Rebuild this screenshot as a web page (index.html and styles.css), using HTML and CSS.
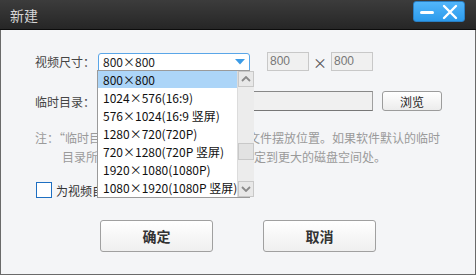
FILE: index.html
```html
<!DOCTYPE html>
<html lang="zh-CN">
<head>
    <meta charset="UTF-8">
    <title>新建</title>
    <link rel="stylesheet" href="styles.css">
</head>
<body>
    <div class="window">
        <div class="titlebar">
            <span class="title">新建</span>
            <div class="win-btns">
                <svg class="win-min" width="16" height="22" viewBox="0 0 16 22">
                    <rect x="1" y="10" width="14" height="3" rx="1.5" fill="#fff"/>
                </svg>
                <svg class="win-close" width="16" height="22" viewBox="0 0 16 22">
                    <path d="M2 5 L14 17 M14 5 L2 17" stroke="#fff" stroke-width="2.4" stroke-linecap="round"/>
                </svg>
            </div>
        </div>

        <div class="content">
            <div class="row">
                <span class="label">视频尺寸：</span>
                <div class="combo">
                    <span class="combo-text">800×800</span>
                    <svg class="combo-arrow" width="10" height="6" viewBox="0 0 10 6">
                        <path d="M0 0 H10 L5 5.5 Z" fill="#3c9be6"/>
                    </svg>
                    <div class="dropdown">
                        <ul class="options">
                            <li class="selected">800×800</li>
                            <li>1024×576(16:9)</li>
                            <li>576×1024(16:9 竖屏)</li>
                            <li>1280×720(720P)</li>
                            <li>720×1280(720P 竖屏)</li>
                            <li>1920×1080(1080P)</li>
                            <li>1080×1920(1080P 竖屏)</li>
                        </ul>
                        <div class="scrollbar">
                            <div class="sb-btn">
                                <svg width="10" height="6" viewBox="0 0 10 6"><path d="M1 5 L5 1 L9 5" stroke="#8a8a8a" stroke-width="1.8" fill="none"/></svg>
                            </div>
                            <div class="sb-track"><div class="sb-thumb"></div></div>
                            <div class="sb-btn">
                                <svg width="10" height="6" viewBox="0 0 10 6"><path d="M1 1 L5 5 L9 1" stroke="#8a8a8a" stroke-width="1.8" fill="none"/></svg>
                            </div>
                        </div>
                    </div>
                </div>
                <div class="num">800</div>
                <span class="times">×</span>
                <div class="num">800</div>
            </div>

            <div class="row row-dir">
                <span class="label">临时目录：</span>
                <div class="path"></div>
                <button class="browse">浏览</button>
            </div>

            <p class="note">注：<span class="q">“临时目录”</span>是软件运行时生成临时文件摆放位置。如果软件默认的临时<br><span class="indent">目录所在磁盘空间不足，请将目录指定到更大的磁盘空间处。</span></p>

            <label class="check">
                <span class="box"></span>
                <span>为视频自动生成封面图片</span>
            </label>

            <div class="actions">
                <button class="btn">确定</button>
                <button class="btn">取消</button>
            </div>
        </div>
    </div>
</body>
</html>
```

FILE: styles.css
```css
body {
    margin: 0;
    background: #f4f5f7;
    font-family: "Noto Sans CJK SC", "Liberation Sans", sans-serif;
    font-size: 12px;
    color: #333;
}

.window {
    width: 476px;
    height: 275px;
    display: flex;
    flex-direction: column;
}

.titlebar {
    height: 29px;
    flex: none;
    display: flex;
    justify-content: space-between;
    align-items: flex-start;
    background: linear-gradient(#3c3c3c, #262626);
    border-bottom: 1px solid #0c0c0c;
}

.title {
    margin: 6px 0 0 10px;
    font-size: 14px;
    line-height: 18px;
    color: #d6d6d6;
}

.win-btns {
    margin: 1px 11px 0 0;
    width: 52px;
    height: 21px;
    display: flex;
    justify-content: space-between;
    padding: 0 6px 0 5px;
    box-sizing: border-box;
    background: linear-gradient(#52b6fb, #2c9bec);
    border: 1px solid #2a7fc4;
    border-radius: 3px;
}

.win-btns svg {
    margin-top: -1px;
}

.content {
    flex: 1;
    border: 1px solid #6a6a6a;
    border-top: none;
    padding: 22px 0 0 34px;
    position: relative;
}

.row {
    display: flex;
    align-items: center;
    height: 19px;
}

.label {
    width: 63px;
    flex: none;
    font-size: 12px;
    color: #444;
}

.combo {
    position: relative;
    width: 152px;
    height: 18px;
    box-sizing: border-box;
    border: 1px solid #5aa6e8;
    border-radius: 3px 3px 0 0;
    background: #fff;
    display: flex;
    align-items: center;
    justify-content: space-between;
    padding: 0 4px 0 4px;
    z-index: 2;
}

.combo-text {
    font-size: 12px;
    color: #222;
}

.combo-arrow {
    margin-top: 1px;
}

.dropdown {
    position: absolute;
    left: -2px;
    top: 16px;
    width: 153px;
    height: 128px;
    box-sizing: border-box;
    border: 1px solid #9a9a9a;
    background: #fff;
    display: flex;
}

.options {
    list-style: none;
    margin: 0;
    padding: 0;
    flex: 1;
}

.options li {
    height: 18px;
    line-height: 17px;
    padding-left: 5px;
    font-size: 12px;
    color: #111;
    white-space: nowrap;
}

.options li.selected {
    background: #acd5f8;
    height: 17px;
    margin-bottom: 1px;
}

.scrollbar {
    width: 17px;
    flex: none;
    background: #ececec;
    border-left: 1px solid #dcdcdc;
    display: flex;
    flex-direction: column;
    box-sizing: border-box;
}

.sb-btn {
    height: 14px;
    border: 1px solid #c8c8c8;
    background: #e8e8e8;
    display: flex;
    align-items: center;
    justify-content: center;
}

.sb-track {
    flex: 1;
    padding-top: 56px;
}

.sb-thumb {
    height: 15px;
    border: 1px solid #c8c8c8;
    background: #e2e2e2;
}

.num {
    margin-left: 17px;
    width: 42px;
    height: 19px;
    box-sizing: border-box;
    border: 1px solid #c8c8c8;
    background: #f0f0f0;
    color: #777;
    font-family: "Liberation Sans", sans-serif;
    font-size: 12px;
    line-height: 17px;
    padding-left: 2px;
}

.times {
    width: 22px;
    text-align: center;
    color: #555;
    font-size: 14px;
}

.times + .num {
    margin-left: 0;
}

.row-dir {
    margin-top: 20px;
    height: 20px;
}

.path {
    width: 275px;
    height: 20px;
    box-sizing: border-box;
    border: 1px solid #a0a0a0;
    border-top-color: #888;
    border-bottom-color: #777;
    background: #f0f0f0;
}

.browse {
    margin-left: 9px;
    width: 60px;
    height: 20px;
    padding: 0;
    border: 1px solid #9c9c9c;
    border-radius: 3px;
    background: linear-gradient(#ffffff, #ececec);
    font-family: inherit;
    font-size: 12px;
    color: #222;
}

.note {
    margin: 17px 0 0;
    width: 425px;
    white-space: nowrap;
    font-size: 12px;
    line-height: 19px;
    color: #9a9a9a;
}

.q {
    margin-right: 3px;
}

.indent {
    padding-left: 27px;
}

.check {
    margin-top: 16px;
    display: flex;
    align-items: center;
    gap: 4px;
    height: 16px;
    color: #333;
    font-size: 12px;
}

.box {
    width: 14px;
    height: 14px;
    border: 1px solid #1e6fc2;
    background: #fff;
    margin-left: 1px;
}

.actions {
    margin: 22px 0 0 -34px;
    display: flex;
    justify-content: center;
    gap: 50px;
}

.btn {
    width: 113px;
    height: 32px;
    padding: 0;
    border: 1px solid #a0a0a0;
    border-radius: 3px;
    background: linear-gradient(#ffffff, #efefef);
    font-family: inherit;
    font-size: 14px;
    font-weight: bold;
    color: #333;
}
```
